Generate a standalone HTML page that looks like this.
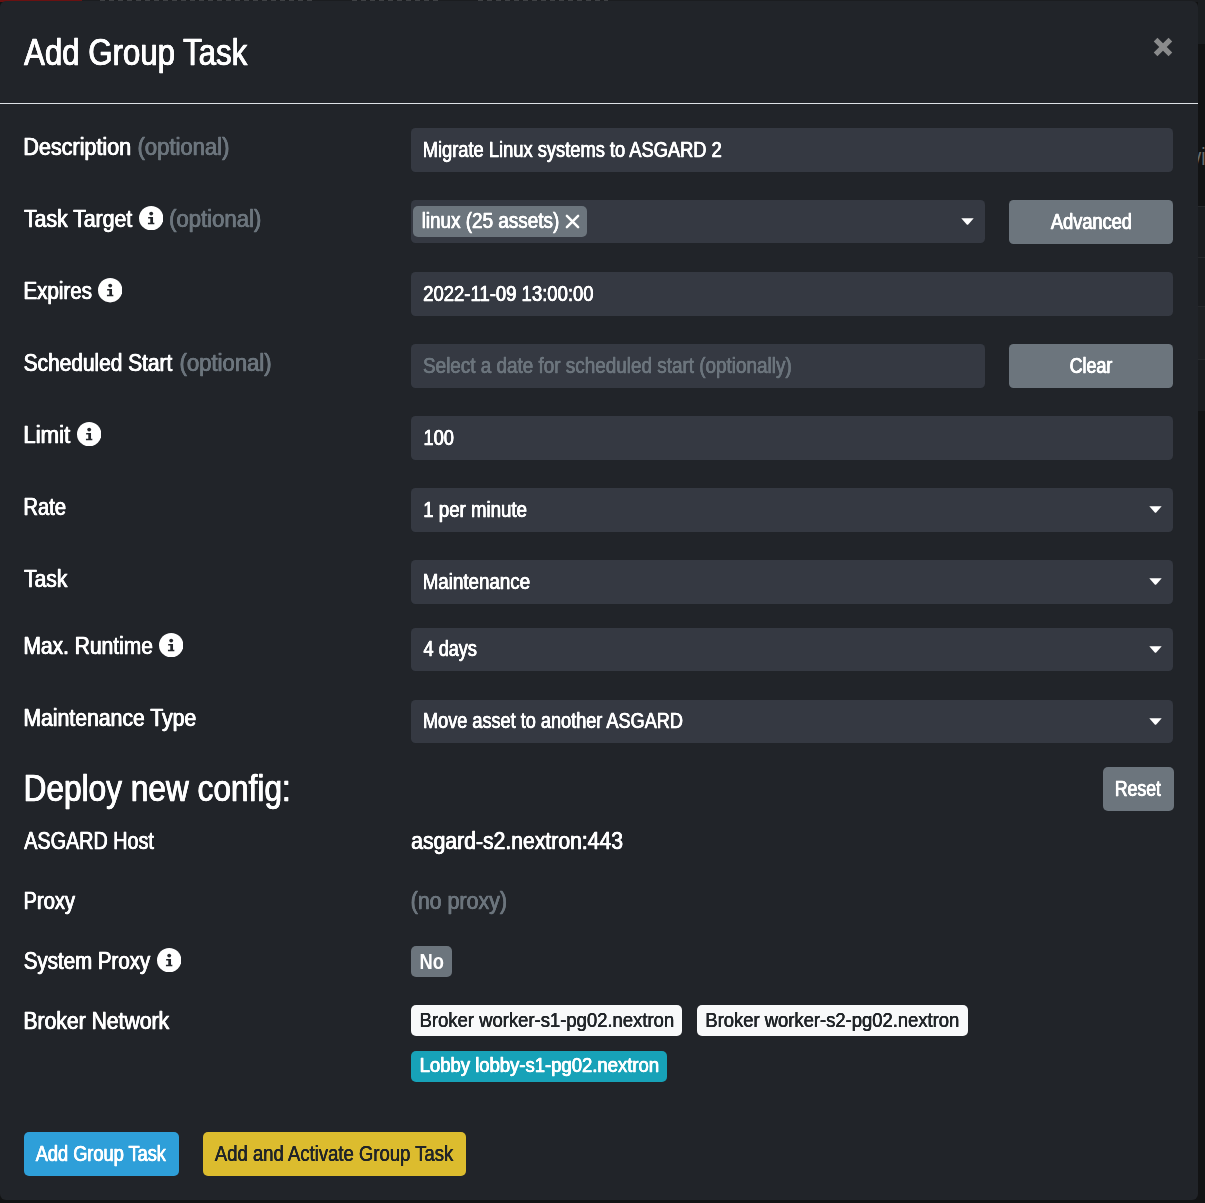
<!DOCTYPE html>
<html lang="en"><head><meta charset="utf-8"><title>Add Group Task</title>
<style>
html,body{margin:0;padding:0;}
body{width:1205px;height:1203px;overflow:hidden;background:#121314;position:relative;font-family:"Liberation Sans", sans-serif;}
.b{position:absolute;display:block;}
.t{position:absolute;left:0;display:block;white-space:nowrap;line-height:1;transform-origin:0 0;font-family:"Liberation Sans", sans-serif;}
#txt{left:0;top:0;width:1205px;height:1203px;will-change:transform;}

#top{left:0;top:0;width:1205px;height:2px;background:#1b1d20;}
#red{left:0;top:0;width:82px;height:2px;background:#6b1111;}
#modal{left:0;top:1px;width:1198px;height:1199px;background:#212429;border-radius:6px;}
#hr{left:0;top:103px;width:1198px;height:1px;background:#dee2e6;}
</style></head><body>
<div class="b" id="top"></div><div class="b" id="red"></div>
<div class="b" style="left:100px;top:0;width:215px;height:1px;background:repeating-linear-gradient(90deg,#3f4144 0 5px,#1b1d20 5px 9px)"></div><div class="b" style="left:352px;top:0;width:88px;height:1px;background:repeating-linear-gradient(90deg,#3f4144 0 5px,#1b1d20 5px 9px)"></div><div class="b" style="left:478px;top:0;width:130px;height:1px;background:repeating-linear-gradient(90deg,#3f4144 0 5px,#1b1d20 5px 9px)"></div>
<div class="b" style="left:1198px;top:0;width:7px;height:44px;background:#1b1e21"></div>
<div class="b" style="left:1198px;top:206px;width:7px;height:205px;background:#1a1c1f"></div>
<div class="b" style="left:1198px;top:307px;width:7px;height:52px;background:#1e2023"></div>
<div class="b" style="left:1198px;top:206px;width:7px;height:1px;background:#26282b"></div><div class="b" style="left:1198px;top:257px;width:7px;height:1px;background:#26282b"></div><div class="b" style="left:1198px;top:306px;width:7px;height:1px;background:#26282b"></div><div class="b" style="left:1198px;top:359px;width:7px;height:1px;background:#26282b"></div>
<span class="t" style="top:145px;font-size:24.4px;color:#6b6b6b;transform:translateX(1191.5px) scaleX(.8)">vi</span>
<div class="b" id="modal"></div><div class="b" id="hr"></div>
<svg class="b" style="left:1151.9px;top:36.05px" width="22" height="22" viewBox="0 0 22 22"><path d="M3.6 3.6L18.4 18.4M18.4 3.6L3.6 18.4" stroke="#8a8b8c" stroke-width="5.2" fill="none"/></svg>
<div class="b" style="left:411px;top:128px;width:762px;height:44px;background:#353942;border-radius:4.5px;"></div>
<div class="b" style="left:411px;top:200px;width:574px;height:43px;background:#353942;border-radius:4.5px;"></div>
<div class="b" style="left:1009px;top:200px;width:164px;height:44px;background:#6c757d;border-radius:4.5px;"></div>
<div class="b" style="left:411px;top:272px;width:762px;height:44px;background:#353942;border-radius:4.5px;"></div>
<div class="b" style="left:411px;top:344px;width:574px;height:44px;background:#353942;border-radius:4.5px;"></div>
<div class="b" style="left:1009px;top:344px;width:164px;height:44px;background:#6c757d;border-radius:4.5px;"></div>
<div class="b" style="left:411px;top:416px;width:762px;height:44px;background:#353942;border-radius:4.5px;"></div>
<div class="b" style="left:411px;top:488px;width:762px;height:44px;background:#353942;border-radius:4.5px;"></div>
<div class="b" style="left:411px;top:560px;width:762px;height:44px;background:#353942;border-radius:4.5px;"></div>
<div class="b" style="left:411px;top:628px;width:762px;height:43px;background:#353942;border-radius:4.5px;"></div>
<div class="b" style="left:411px;top:700px;width:762px;height:43px;background:#353942;border-radius:4.5px;"></div>
<div class="b" style="left:413px;top:206px;width:174px;height:31px;background:#6c757d;border-radius:5px;"></div>
<div class="b" style="left:1103px;top:767px;width:71px;height:44px;background:#6c757d;border-radius:5px;"></div>
<div class="b" style="left:411px;top:946px;width:41px;height:31px;background:#6c757d;border-radius:5px;"></div>
<div class="b" style="left:411px;top:1005px;width:271px;height:31px;background:#f8f9fa;border-radius:5px;"></div>
<div class="b" style="left:697px;top:1005px;width:271px;height:31px;background:#f8f9fa;border-radius:5px;"></div>
<div class="b" style="left:411px;top:1051px;width:256px;height:31px;background:#17a2b8;border-radius:5px;"></div>
<div class="b" style="left:24px;top:1132px;width:155px;height:44px;background:#2e9fd9;border-radius:5px;"></div>
<div class="b" style="left:203px;top:1132px;width:263px;height:44px;background:#dcbc2e;border-radius:5px;"></div>
<svg class="b" style="left:960.5px;top:217.5px" width="13" height="7" viewBox="0 0 13 7"><path d="M0.3 0.2H12.7L7 6.7H6Z" fill="#fff"/></svg>
<svg class="b" style="left:1148.5px;top:506.4px" width="13" height="7" viewBox="0 0 13 7"><path d="M0.3 0.2H12.7L7 6.7H6Z" fill="#fff"/></svg>
<svg class="b" style="left:1148.5px;top:578.4px" width="13" height="7" viewBox="0 0 13 7"><path d="M0.3 0.2H12.7L7 6.7H6Z" fill="#fff"/></svg>
<svg class="b" style="left:1148.5px;top:645.7px" width="13" height="7" viewBox="0 0 13 7"><path d="M0.3 0.2H12.7L7 6.7H6Z" fill="#fff"/></svg>
<svg class="b" style="left:1148.5px;top:717.7px" width="13" height="7" viewBox="0 0 13 7"><path d="M0.3 0.2H12.7L7 6.7H6Z" fill="#fff"/></svg>
<svg class="b" style="left:138.8px;top:205.8px" width="24.4" height="24.4" viewBox="0 0 24 24"><circle cx="12" cy="12" r="12" fill="#fff"/><circle cx="12" cy="7.5" r="1.9" fill="#212429"/><path d="M9 10.8H13.8V16.4H15.1V17.9H8.8V16.4H11.1V12.3H9Z" fill="#212429"/></svg>
<svg class="b" style="left:97.8px;top:278.2px" width="24.4" height="24.4" viewBox="0 0 24 24"><circle cx="12" cy="12" r="12" fill="#fff"/><circle cx="12" cy="7.5" r="1.9" fill="#212429"/><path d="M9 10.8H13.8V16.4H15.1V17.9H8.8V16.4H11.1V12.3H9Z" fill="#212429"/></svg>
<svg class="b" style="left:76.8px;top:421.8px" width="24.4" height="24.4" viewBox="0 0 24 24"><circle cx="12" cy="12" r="12" fill="#fff"/><circle cx="12" cy="7.5" r="1.9" fill="#212429"/><path d="M9 10.8H13.8V16.4H15.1V17.9H8.8V16.4H11.1V12.3H9Z" fill="#212429"/></svg>
<svg class="b" style="left:158.8px;top:632.8px" width="24.4" height="24.4" viewBox="0 0 24 24"><circle cx="12" cy="12" r="12" fill="#fff"/><circle cx="12" cy="7.5" r="1.9" fill="#212429"/><path d="M9 10.8H13.8V16.4H15.1V17.9H8.8V16.4H11.1V12.3H9Z" fill="#212429"/></svg>
<svg class="b" style="left:156.8px;top:947.8px" width="24.4" height="24.4" viewBox="0 0 24 24"><circle cx="12" cy="12" r="12" fill="#fff"/><circle cx="12" cy="7.5" r="1.9" fill="#212429"/><path d="M9 10.8H13.8V16.4H15.1V17.9H8.8V16.4H11.1V12.3H9Z" fill="#212429"/></svg>
<svg class="b" style="left:565px;top:214px" width="15" height="15" viewBox="0 0 15 15"><path d="M1.9 1.9L13.1 13.1M13.1 1.9L1.9 13.1" stroke="#fff" stroke-width="2.5" stroke-linecap="round" fill="none"/></svg>
<div class="b" id="txt">
<span class="t" style="top:35px;font-size:36.3px;color:#ffffff;-webkit-text-stroke:0.48px #ffffff;text-shadow:0.44px 0 0 #ffffff,-0.44px 0 0 #ffffff;transform:translateX(24.06px) scaleX(0.8598);">Add Group Task</span>
<span class="t" style="top:135px;font-size:24.4px;color:#ffffff;-webkit-text-stroke:0.45px #ffffff;text-shadow:0.41px 0 0 #ffffff,-0.41px 0 0 #ffffff;transform:translateX(23.32px) scaleX(0.8845);">Description</span>
<span class="t" style="top:135px;font-size:24.4px;color:#6c757d;-webkit-text-stroke:0.45px #6c757d;text-shadow:0.41px 0 0 #6c757d,-0.41px 0 0 #6c757d;transform:translateX(137.52px) scaleX(0.9040);">(optional)</span>
<span class="t" style="top:207px;font-size:24.4px;color:#ffffff;-webkit-text-stroke:0.45px #ffffff;text-shadow:0.41px 0 0 #ffffff,-0.41px 0 0 #ffffff;transform:translateX(23.99px) scaleX(0.8708);">Task Target</span>
<span class="t" style="top:207px;font-size:24.4px;color:#6c757d;-webkit-text-stroke:0.45px #6c757d;text-shadow:0.41px 0 0 #6c757d,-0.41px 0 0 #6c757d;transform:translateX(169.05px) scaleX(0.9078);">(optional)</span>
<span class="t" style="top:279px;font-size:24.4px;color:#ffffff;-webkit-text-stroke:0.45px #ffffff;text-shadow:0.41px 0 0 #ffffff,-0.41px 0 0 #ffffff;transform:translateX(23.47px) scaleX(0.8421);">Expires</span>
<span class="t" style="top:351px;font-size:24.4px;color:#ffffff;-webkit-text-stroke:0.45px #ffffff;text-shadow:0.41px 0 0 #ffffff,-0.41px 0 0 #ffffff;transform:translateX(23.65px) scaleX(0.8564);">Scheduled Start</span>
<span class="t" style="top:351px;font-size:24.4px;color:#6c757d;-webkit-text-stroke:0.45px #6c757d;text-shadow:0.41px 0 0 #6c757d,-0.41px 0 0 #6c757d;transform:translateX(179.55px) scaleX(0.9052);">(optional)</span>
<span class="t" style="top:423px;font-size:24.4px;color:#ffffff;-webkit-text-stroke:0.45px #ffffff;text-shadow:0.41px 0 0 #ffffff,-0.41px 0 0 #ffffff;transform:translateX(23.33px) scaleX(0.9108);">Limit</span>
<span class="t" style="top:495px;font-size:24.4px;color:#ffffff;-webkit-text-stroke:0.45px #ffffff;text-shadow:0.41px 0 0 #ffffff,-0.41px 0 0 #ffffff;transform:translateX(23.44px) scaleX(0.8261);">Rate</span>
<span class="t" style="top:567px;font-size:24.4px;color:#ffffff;-webkit-text-stroke:0.45px #ffffff;text-shadow:0.41px 0 0 #ffffff,-0.41px 0 0 #ffffff;transform:translateX(23.98px) scaleX(0.8645);">Task</span>
<span class="t" style="top:634px;font-size:24.4px;color:#ffffff;-webkit-text-stroke:0.45px #ffffff;text-shadow:0.41px 0 0 #ffffff,-0.41px 0 0 #ffffff;transform:translateX(23.39px) scaleX(0.8609);">Max. Runtime</span>
<span class="t" style="top:706px;font-size:24.4px;color:#ffffff;-webkit-text-stroke:0.45px #ffffff;text-shadow:0.41px 0 0 #ffffff,-0.41px 0 0 #ffffff;transform:translateX(23.43px) scaleX(0.8688);">Maintenance Type</span>
<span class="t" style="top:771px;font-size:36.3px;color:#ffffff;-webkit-text-stroke:0.48px #ffffff;text-shadow:0.44px 0 0 #ffffff,-0.44px 0 0 #ffffff;transform:translateX(23.57px) scaleX(0.8712);">Deploy new config:</span>
<span class="t" style="top:829px;font-size:24.4px;color:#ffffff;-webkit-text-stroke:0.45px #ffffff;text-shadow:0.41px 0 0 #ffffff,-0.41px 0 0 #ffffff;transform:translateX(24.25px) scaleX(0.8107);">ASGARD Host</span>
<span class="t" style="top:889px;font-size:24.4px;color:#ffffff;-webkit-text-stroke:0.45px #ffffff;text-shadow:0.41px 0 0 #ffffff,-0.41px 0 0 #ffffff;transform:translateX(23.49px) scaleX(0.8261);">Proxy</span>
<span class="t" style="top:949px;font-size:24.4px;color:#ffffff;-webkit-text-stroke:0.45px #ffffff;text-shadow:0.41px 0 0 #ffffff,-0.41px 0 0 #ffffff;transform:translateX(23.79px) scaleX(0.8401);">System Proxy</span>
<span class="t" style="top:1009px;font-size:24.4px;color:#ffffff;-webkit-text-stroke:0.45px #ffffff;text-shadow:0.41px 0 0 #ffffff,-0.41px 0 0 #ffffff;transform:translateX(23.38px) scaleX(0.8674);">Broker Network</span>
<span class="t" style="top:139px;font-size:21.2px;color:#ffffff;-webkit-text-stroke:0.36px #ffffff;text-shadow:0.33px 0 0 #ffffff,-0.33px 0 0 #ffffff;transform:translateX(422.73px) scaleX(0.8639);">Migrate Linux systems to ASGARD 2</span>
<span class="t" style="top:210px;font-size:21.2px;color:#ffffff;-webkit-text-stroke:0.36px #ffffff;text-shadow:0.33px 0 0 #ffffff,-0.33px 0 0 #ffffff;transform:translateX(421.67px) scaleX(0.8919);">linux (25 assets)</span>
<span class="t" style="top:283px;font-size:21.2px;color:#ffffff;-webkit-text-stroke:0.36px #ffffff;text-shadow:0.33px 0 0 #ffffff,-0.33px 0 0 #ffffff;transform:translateX(423.16px) scaleX(0.8734);">2022-11-09 13:00:00</span>
<span class="t" style="top:355px;font-size:21.2px;color:#6c757d;-webkit-text-stroke:0.36px #6c757d;text-shadow:0.33px 0 0 #6c757d,-0.33px 0 0 #6c757d;transform:translateX(423.02px) scaleX(0.8918);">Select a date for scheduled start (optionally)</span>
<span class="t" style="top:427px;font-size:21.2px;color:#ffffff;-webkit-text-stroke:0.36px #ffffff;text-shadow:0.33px 0 0 #ffffff,-0.33px 0 0 #ffffff;transform:translateX(423.48px) scaleX(0.8613);">100</span>
<span class="t" style="top:499px;font-size:21.2px;color:#ffffff;-webkit-text-stroke:0.36px #ffffff;text-shadow:0.33px 0 0 #ffffff,-0.33px 0 0 #ffffff;transform:translateX(423.29px) scaleX(0.8803);">1 per minute</span>
<span class="t" style="top:571px;font-size:21.2px;color:#ffffff;-webkit-text-stroke:0.36px #ffffff;text-shadow:0.33px 0 0 #ffffff,-0.33px 0 0 #ffffff;transform:translateX(422.68px) scaleX(0.8853);">Maintenance</span>
<span class="t" style="top:638px;font-size:21.2px;color:#ffffff;-webkit-text-stroke:0.36px #ffffff;text-shadow:0.33px 0 0 #ffffff,-0.33px 0 0 #ffffff;transform:translateX(423.57px) scaleX(0.8548);">4 days</span>
<span class="t" style="top:710px;font-size:21.2px;color:#ffffff;-webkit-text-stroke:0.36px #ffffff;text-shadow:0.33px 0 0 #ffffff,-0.33px 0 0 #ffffff;transform:translateX(423.00px) scaleX(0.8556);">Move asset to another ASGARD</span>
<span class="t" style="top:211px;font-size:21.2px;color:#ffffff;-webkit-text-stroke:0.42px #ffffff;text-shadow:0.39px 0 0 #ffffff,-0.39px 0 0 #ffffff;transform:translateX(1050.96px) scaleX(0.8590);">Advanced</span>
<span class="t" style="top:355px;font-size:21.2px;color:#ffffff;-webkit-text-stroke:0.42px #ffffff;text-shadow:0.39px 0 0 #ffffff,-0.39px 0 0 #ffffff;transform:translateX(1069.65px) scaleX(0.8425);">Clear</span>
<span class="t" style="top:778px;font-size:21.2px;color:#ffffff;-webkit-text-stroke:0.42px #ffffff;text-shadow:0.39px 0 0 #ffffff,-0.39px 0 0 #ffffff;transform:translateX(1114.81px) scaleX(0.8333);">Reset</span>
<span class="t" style="top:829px;font-size:24.4px;color:#ffffff;-webkit-text-stroke:0.45px #ffffff;text-shadow:0.41px 0 0 #ffffff,-0.41px 0 0 #ffffff;transform:translateX(411.22px) scaleX(0.8679);">asgard-s2.nextron:443</span>
<span class="t" style="top:889px;font-size:24.4px;color:#6c757d;-webkit-text-stroke:0.45px #6c757d;text-shadow:0.41px 0 0 #6c757d,-0.41px 0 0 #6c757d;transform:translateX(410.65px) scaleX(0.8778);">(no proxy)</span>
<span class="t" style="top:951px;font-size:22.0px;color:#ffffff;font-weight:700;transform:translateX(419.50px) scaleX(0.8332);">No</span>
<span class="t" style="top:1009px;font-size:21.0px;color:#212529;-webkit-text-stroke:0.24px #212529;text-shadow:0.22px 0 0 #212529,-0.22px 0 0 #212529;transform:translateX(419.61px) scaleX(0.8794);">Broker worker-s1-pg02.nextron</span>
<span class="t" style="top:1009px;font-size:21.0px;color:#212529;-webkit-text-stroke:0.24px #212529;text-shadow:0.22px 0 0 #212529,-0.22px 0 0 #212529;transform:translateX(705.35px) scaleX(0.8773);">Broker worker-s2-pg02.nextron</span>
<span class="t" style="top:1054px;font-size:21.0px;color:#ffffff;-webkit-text-stroke:0.42px #ffffff;text-shadow:0.39px 0 0 #ffffff,-0.39px 0 0 #ffffff;transform:translateX(419.69px) scaleX(0.8800);">Lobby lobby-s1-pg02.nextron</span>
<span class="t" style="top:1143px;font-size:21.2px;color:#ffffff;-webkit-text-stroke:0.36px #ffffff;text-shadow:0.33px 0 0 #ffffff,-0.33px 0 0 #ffffff;transform:translateX(35.71px) scaleX(0.8593);">Add Group Task</span>
<span class="t" style="top:1143px;font-size:21.2px;color:#212529;-webkit-text-stroke:0.18px #212529;text-shadow:0.17px 0 0 #212529,-0.17px 0 0 #212529;transform:translateX(214.85px) scaleX(0.8737);">Add and Activate Group Task</span>
</div>
</body></html>
